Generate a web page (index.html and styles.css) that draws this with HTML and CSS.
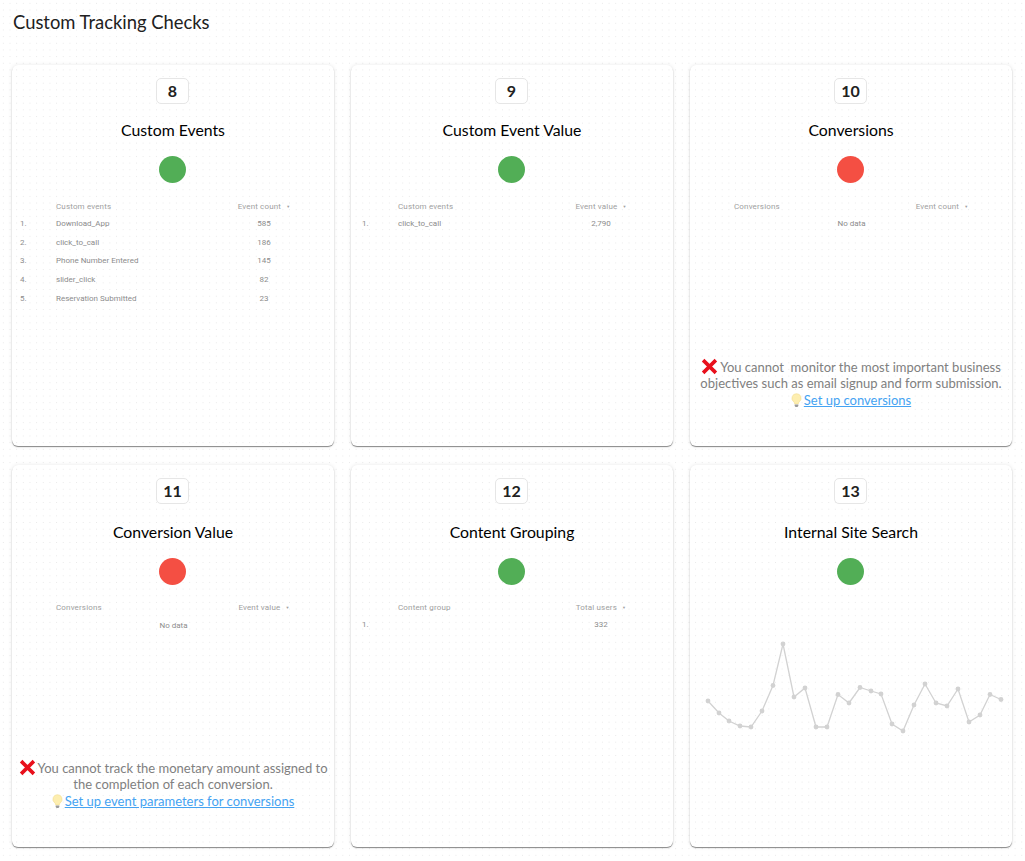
FILE: index.html
```html
<!DOCTYPE html>
<html lang="en">
<head>
  <meta charset="UTF-8">
  <title>Custom Tracking Checks</title>
  <link rel="stylesheet" href="styles.css">
</head>
<body>
  <h1 class="page-title">Custom Tracking Checks</h1>

  <div class="cards">

    <div class="card">
      <div class="num">8</div>
      <h2>Custom Events</h2>
      <div class="dot green"></div>
      <div class="tbl">
        <div class="tbl-row tbl-head"><span></span><span>Custom events</span><span class="val">Event count <i>▼</i></span></div>
        <div class="tbl-row"><span>1.</span><span>Download_App</span><span class="val">585</span></div>
        <div class="tbl-row"><span>2.</span><span>click_to_call</span><span class="val">186</span></div>
        <div class="tbl-row"><span>3.</span><span>Phone Number Entered</span><span class="val">145</span></div>
        <div class="tbl-row"><span>4.</span><span>slider_click</span><span class="val">82</span></div>
        <div class="tbl-row"><span>5.</span><span>Reservation Submitted</span><span class="val">23</span></div>
      </div>
    </div>

    <div class="card">
      <div class="num">9</div>
      <h2>Custom Event Value</h2>
      <div class="dot green"></div>
      <div class="tbl tbl-shift">
        <div class="tbl-row tbl-head"><span></span><span>Custom events</span><span class="val">Event value <i>▼</i></span></div>
        <div class="tbl-row"><span>1.</span><span>click_to_call</span><span class="val">2,790</span></div>
      </div>
    </div>

    <div class="card">
      <div class="num">10</div>
      <h2>Conversions</h2>
      <div class="dot red"></div>
      <div class="tbl">
        <div class="tbl-row tbl-head"><span></span><span>Conversions</span><span class="val">Event count <i>▼</i></span></div>
        <div class="no-data">No data</div>
      </div>
      <div class="msg">
        <svg class="cross" viewBox="0 0 16 16"><path d="M2 2 L14 14 M14 2 L2 14"/></svg>You cannot&nbsp; monitor the most important business objectives such as email signup and form submission.<br>
        <svg class="bulb" viewBox="0 0 12 16"><path class="glass" d="M6 .5a5 5 0 0 0-3 9c.7.6 1 1.3 1 2.2h4c0-.9.3-1.6 1-2.2a5 5 0 0 0-3-9z"/><path class="base" d="M4 12.3h4v1.6l-1 1.3H5l-1-1.3z"/></svg><a href="#">Set up conversions</a>
      </div>
    </div>

    <div class="card">
      <div class="num">11</div>
      <h2>Conversion Value</h2>
      <div class="dot red"></div>
      <div class="tbl">
        <div class="tbl-row tbl-head"><span></span><span>Conversions</span><span class="val">Event value <i>▼</i></span></div>
        <div class="no-data">No data</div>
      </div>
      <div class="msg">
        <svg class="cross" viewBox="0 0 16 16"><path d="M2 2 L14 14 M14 2 L2 14"/></svg>You cannot track the monetary amount assigned to the completion of each conversion.<br>
        <svg class="bulb" viewBox="0 0 12 16"><path class="glass" d="M6 .5a5 5 0 0 0-3 9c.7.6 1 1.3 1 2.2h4c0-.9.3-1.6 1-2.2a5 5 0 0 0-3-9z"/><path class="base" d="M4 12.3h4v1.6l-1 1.3H5l-1-1.3z"/></svg><a href="#">Set up event parameters for conversions</a>
      </div>
    </div>

    <div class="card">
      <div class="num">12</div>
      <h2>Content Grouping</h2>
      <div class="dot green"></div>
      <div class="tbl tbl-shift">
        <div class="tbl-row tbl-head"><span></span><span>Content group</span><span class="val">Total users <i>▼</i></span></div>
        <div class="tbl-row"><span>1.</span><span></span><span class="val">332</span></div>
      </div>
    </div>

    <div class="card">
      <div class="num">13</div>
      <h2>Internal Site Search</h2>
      <div class="dot green"></div>
      <svg class="spark" viewBox="0 0 322 110">
        <defs>
          <marker id="pt" markerUnits="userSpaceOnUse" markerWidth="6" markerHeight="6" refX="3" refY="3">
            <circle cx="3" cy="3" r="2.4" fill="#d2d2d2"/>
          </marker>
        </defs>
        <polyline points="17,21 28,33 38,41 49,46 60,47 71,31 82,5.5 92,-36 103,17 114,8 125,47 136,47 147,14.5 158,23 169,7.5 180,11 190,14 201,44 212,51 223,25 234,4 245,23 256,26 267,9 278,42 289,35 299,14.5 310,19.5"/>
      </svg>
    </div>

  </div>
</body>
</html>
```

FILE: styles.css
```css
* {
  box-sizing: border-box;
}

body {
  margin: 0;
  padding: 11px 12px 0;
  min-height: 861px;
  overflow: hidden;
  font-family: 'Lato', sans-serif;
  background-color: #fff;
  background-image: radial-gradient(circle at center, #e8e8e8 0, #e8e8e8 .6px, transparent .8px);
  background-size: 6.67px 6.67px;
}

.page-title {
  margin: 0 0 31px 1px;
  font-size: 18.4px;
  font-weight: 400;
  line-height: 23px;
  color: #212121;
}

.cards {
  display: grid;
  grid-template-columns: repeat(3, 322px);
  grid-template-rows: 381px 382px;
  column-gap: 17px;
  row-gap: 19px;
}

.card {
  display: flex;
  flex-direction: column;
  align-items: center;
  padding-top: 13px;
  border-radius: 6px;
  box-shadow: 0 0 4px rgba(0, 0, 0, 0.09), 0 1px 1px rgba(0, 0, 0, 0.45);
}

.num {
  width: 33px;
  height: 26px;
  margin-left: -1px;
  border: 1px solid #e6e6e6;
  border-radius: 5px;
  background: #fff;
  font-size: 16px;
  font-weight: 700;
  line-height: 23px;
  text-align: center;
  color: #212121;
}

.card h2 {
  margin: 16px 0;
  font-size: 15.8px;
  font-weight: 400;
  line-height: 20px;
  color: #000;
}

.card:nth-child(n+4) h2 {
  margin-top: 17.5px;
}

.dot {
  width: 27px;
  height: 27px;
  margin-left: -1px;
  border-radius: 50%;
}

.green {
  background: #52ae56;
}

.red {
  background: #f44f43;
}

.tbl {
  width: 100%;
  margin-top: 15px;
  padding: 0 43px 0 8px;
  font-family: 'Roboto', sans-serif;
  font-size: 8px;
  color: #8c8c8c;
}

.tbl-shift {
  padding: 0 45px 0 11px;
}

.tbl-row {
  display: grid;
  grid-template-columns: 36px 1fr 54px;
  height: 18.8px;
  align-items: center;
}

.tbl-head {
  height: 16px;
  letter-spacing: .15px;
  color: #a0a0a0;
}

.tbl-head i {
  margin-left: 3px;
  font-size: 4px;
  font-style: normal;
  vertical-align: 1px;
}

.val {
  text-align: center;
  white-space: nowrap;
}

.no-data {
  padding-left: 36px;
  padding-top: 3px;
  line-height: 13px;
  text-align: center;
}

.msg {
  width: 100%;
  margin-top: auto;
  padding: 0 5px 38px;
  font-size: 13px;
  line-height: 16.5px;
  text-align: center;
  color: #808080;
}

.msg a {
  color: #45a3f2;
}

.cross {
  width: 17px;
  height: 17px;
  margin-right: 2px;
  vertical-align: -3px;
}

.cross path {
  fill: none;
  stroke: #e8101c;
  stroke-width: 3.4;
}

.bulb {
  width: 11px;
  height: 15px;
  margin-right: 2px;
  vertical-align: -3px;
}

.glass {
  fill: #fdeeb0;
  stroke: #f3dc8e;
  stroke-width: .6;
}

.base {
  fill: #9a9a9a;
}

.spark {
  width: 322px;
  height: 110px;
  margin-top: 95.5px;
  margin-left: 2px;
  overflow: visible;
}

.spark polyline {
  fill: none;
  stroke: #d2d2d2;
  stroke-width: 1.3;
  marker-start: url(#pt);
  marker-mid: url(#pt);
  marker-end: url(#pt);
}
```
